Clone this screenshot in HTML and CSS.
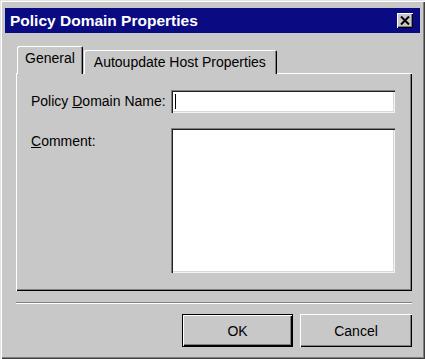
FILE: index.html
```html
<!DOCTYPE html>
<html lang="en">
<head>
    <meta charset="UTF-8">
    <title>Policy Domain Properties</title>
    <link rel="stylesheet" href="styles.css">
</head>
<body>
    <div class="window">
        <div class="titlebar">
            <span class="title">Policy Domain Properties</span>
            <div class="close-btn">
                <svg width="10" height="9" viewBox="0 0 10 9">
                    <path d="M1 0.5 L9 8.5 M9 0.5 L1 8.5" stroke="#000" stroke-width="2"/>
                </svg>
            </div>
        </div>

        <div class="content">
            <div class="tabs">
                <div class="tab active">General</div>
                <div class="tab">Autoupdate Host Properties</div>
            </div>

            <div class="panel">
                <div class="label label-name">Policy <u>D</u>omain Name:</div>
                <div class="field field-name"><span class="caret"></span></div>
                <div class="label label-comment"><u>C</u>omment:</div>
                <div class="field field-comment"></div>
            </div>

            <div class="separator"></div>

            <div class="buttons">
                <div class="btn btn-default">OK</div>
                <div class="btn">Cancel</div>
            </div>
        </div>
    </div>
</body>
</html>
```

FILE: styles.css
```css
body {
    margin: 0;
    padding: 0;
    background: #fff;
    font-family: "Liberation Sans", Arial, sans-serif;
    font-size: 14px;
    color: #000;
}

.window {
    width: 425px;
    height: 359px;
    box-sizing: border-box;
    padding: 8px 5px 0 5px;
    background: #c8c8c8;
    box-shadow: inset 1px 1px #e4e4e4, inset 2px 2px #fff, inset -1px -1px #404040, inset -2px -2px #808080;
}

.titlebar {
    height: 25px;
    background: #0a0a82;
    display: flex;
    align-items: center;
    justify-content: space-between;
    padding: 0 7px 0 5px;
}

.title {
    color: #fff;
    font-weight: bold;
    font-size: 15.5px;
}

.close-btn {
    width: 16px;
    height: 15px;
    box-sizing: border-box;
    background: #c8c8c8;
    display: flex;
    align-items: center;
    justify-content: center;
    box-shadow: inset 1px 1px #fff, inset -1px -1px #000, inset -2px -2px #808080;
}

.close-btn svg {
    display: block;
    margin: 0 1px 1px 0;
}

.content {
    padding: 13px 8px 0 11px;
}

.tabs {
    display: flex;
    align-items: flex-end;
    padding-left: 1px;
    position: relative;
    z-index: 1;
    margin-bottom: -1px;
}

.tab {
    height: 24px;
    box-sizing: border-box;
    padding: 0 11px 0 10px;
    display: flex;
    align-items: center;
    border-radius: 2px 2px 0 0;
    box-shadow: inset 1px 1px #fff, inset -1px 0 #000, inset -2px 0 #808080;
    background: #c8c8c8;
}

.tab.active {
    height: 28px;
    padding: 0 8px 4px 8px;
    margin-right: 1px;
}

.panel {
    height: 218px;
    box-sizing: border-box;
    padding: 17px 17px 18px 15px;
    display: grid;
    grid-template-columns: 140px 224px;
    grid-template-rows: 23px 145px;
    row-gap: 15px;
    box-shadow: inset 1px 1px #fff, inset -1px -1px #000, inset -2px -2px #808080;
}

.label-name {
    align-self: center;
    padding-bottom: 1px;
}

.label-comment {
    padding-top: 5px;
}

.field {
    background: #fff;
    position: relative;
    box-shadow: inset 1px 1px #808080, inset 2px 2px #202020, inset -1px -1px #f4f4f4, inset -2px -2px #d8d8d8;
}

.caret {
    position: absolute;
    left: 4px;
    top: 4px;
    width: 1px;
    height: 15px;
    background: #000;
}

.separator {
    margin: 11px 0 0 0;
    height: 1px;
    border-top: 1px solid #808080;
    background: #fff;
}

.buttons {
    display: flex;
    justify-content: flex-end;
    gap: 7px;
    margin-top: 10px;
}

.btn {
    width: 112px;
    height: 33px;
    box-sizing: border-box;
    display: flex;
    align-items: center;
    justify-content: center;
    box-shadow: inset 1px 1px #fff, inset -1px -1px #000, inset -2px -2px #808080;
}

.btn-default {
    width: 111px;
    border: 1px solid #000;
}
```
